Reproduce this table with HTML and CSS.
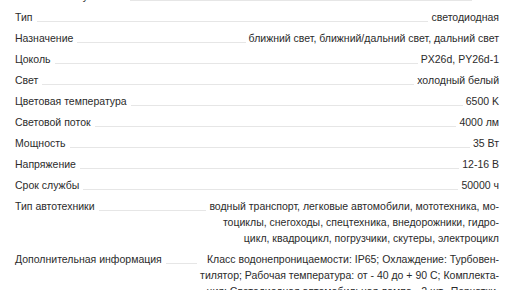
FILE: index.html
```html
<!DOCTYPE html>
<html lang="ru">
<head>
<meta charset="utf-8">
<link rel="stylesheet" href="styles.css">
</head>
<body>
<dl class="specs">
  <div class="row"><dt class="label">Количество в упаковке</dt><span class="leader"></span><dd class="value">2 шт.</dd></div>
  <div class="row"><dt class="label">Тип</dt><span class="leader"></span><dd class="value">светодиодная</dd></div>
  <div class="row"><dt class="label">Назначение</dt><span class="leader"></span><dd class="value">ближний свет, ближний/дальний свет, дальний свет</dd></div>
  <div class="row"><dt class="label">Цоколь</dt><span class="leader"></span><dd class="value">PX26d, PY26d-1</dd></div>
  <div class="row"><dt class="label">Свет</dt><span class="leader"></span><dd class="value">холодный белый</dd></div>
  <div class="row"><dt class="label">Цветовая температура</dt><span class="leader"></span><dd class="value">6500 K</dd></div>
  <div class="row"><dt class="label">Световой поток</dt><span class="leader"></span><dd class="value">4000 лм</dd></div>
  <div class="row"><dt class="label">Мощность</dt><span class="leader"></span><dd class="value">35 Вт</dd></div>
  <div class="row"><dt class="label">Напряжение</dt><span class="leader"></span><dd class="value">12-16 В</dd></div>
  <div class="row"><dt class="label">Срок службы</dt><span class="leader"></span><dd class="value">50000 ч</dd></div>
  <div class="row"><dt class="label">Тип автотехники</dt><span class="leader"></span><dd class="value">водный транспорт, легковые автомобили, мототехника, мо-<br>тоциклы, снегоходы, спецтехника, внедорожники, гидро-<br>цикл, квадроцикл, погрузчики, скутеры, электроцикл</dd></div>
  <div class="row"><dt class="label">Дополнительная информация</dt><span class="leader"></span><dd class="value">Класс водонепроницаемости: IP65; Охлаждение: Турбовен-<br>тилятор; Рабочая температура: от - 40 до + 90 С; Комплекта-<br>ция: Светодиодная автомобильная лампа - 2 шт., Перчатки.</dd></div>
</dl>
</body>
</html>
```
FILE: styles.css
```css
html, body {
  margin: 0;
  padding: 0;
  background: #ffffff;
  overflow: hidden;
}

body {
  font-family: "Liberation Sans", Arial, sans-serif;
  font-size: 10.5px;
  line-height: 16px;
  color: #2b2b2b;
}

.specs {
  margin: -12px 17px 0 15px;
  padding: 0;
  display: flex;
  flex-direction: column;
  gap: 5px;
}

.row {
  display: flex;
  align-items: flex-start;
}

.label {
  margin: 0;
  white-space: nowrap;
}

.leader {
  flex: 1 1 auto;
  height: 1px;
  margin: 12px 3px 0 4px;
  background: #e6e6e6;
}

.value {
  margin: 0;
  text-align: right;
  white-space: nowrap;
}
```
